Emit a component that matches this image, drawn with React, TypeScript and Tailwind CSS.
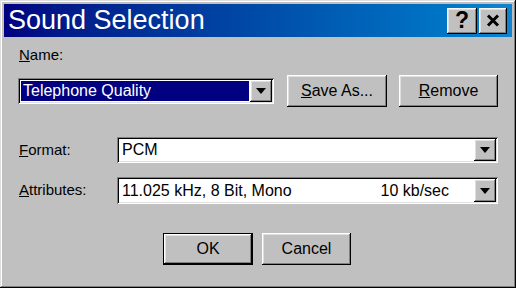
import React from 'react';

const raised =
  'bg-[#c0c0c0] shadow-[inset_-1px_-1px_#000,inset_1px_1px_#fff,inset_-2px_-2px_#808080,inset_2px_2px_#dfdfdf]';
const sunken =
  'shadow-[inset_1px_1px_#808080,inset_-1px_-1px_#fff,inset_2px_2px_#000,inset_-2px_-2px_#dfdfdf]';

const Arrow = () => (
  <svg width="10" height="6" viewBox="0 0 10 6">
    <path d="M0 0 H10 L5 6 Z" fill="#000" />
  </svg>
);

const DropButton = () => (
  <div className={`w-[22px] self-stretch flex items-center justify-center ${raised}`}>
    <Arrow />
  </div>
);

const Combo: React.FC<{ className?: string; children: React.ReactNode; selected?: boolean }> = ({
  className = '',
  children,
  selected,
}) => (
  <div className={`flex bg-white p-[2px] ${sunken} ${className}`}>
    <div className="flex-1 flex items-center p-[1px] min-w-0">
      <div
        className={`flex-1 h-full flex items-center px-[2px] ${
          selected ? 'bg-[#000080] text-white' : 'text-black'
        }`}
      >
        {children}
      </div>
    </div>
    <DropButton />
  </div>
);

const Button: React.FC<{ children: React.ReactNode; className?: string; isDefault?: boolean }> = ({
  children,
  className = '',
  isDefault,
}) =>
  isDefault ? (
    <div className={`border border-black ${className}`}>
      <div className={`w-full h-full flex items-center justify-center ${raised}`}>{children}</div>
    </div>
  ) : (
    <div className={`flex items-center justify-center ${raised} ${className}`}>{children}</div>
  );

export default function App() {
  return (
    <div
      className="w-[516px] h-[288px] bg-[#c0c0c0] p-[4px] flex flex-col text-[16px] text-black shadow-[inset_-1px_-1px_#000,inset_1px_1px_#dfdfdf,inset_-2px_-2px_#808080,inset_2px_2px_#fff]"
      style={{ fontFamily: '"Liberation Sans", Arial, sans-serif' }}
    >
      {/* Title bar */}
      <div className="h-[33px] bg-gradient-to-r from-[#000080] to-[#1084d0] flex items-center pl-[4px] pr-[5px]">
        <span className="text-white text-[27px] leading-none flex-1">Sound Selection</span>
        <Button className="w-[30px] h-[26px]">
          <span className="font-bold text-[23px] leading-none">?</span>
        </Button>
        <Button className="w-[28px] h-[26px] ml-[2px]">
          <svg width="14" height="13" viewBox="0 0 14 13">
            <path d="M2 1.5 L12 11.5 M12 1.5 L2 11.5" stroke="#000" strokeWidth="3" />
          </svg>
        </Button>
      </div>

      {/* Body */}
      <div className="flex flex-col pl-[14px] pr-[14px]">
        <div className="mt-[9px] h-[18px] leading-[18px] text-[15px] pl-[1px]">
          <span className="underline">N</span>ame:
        </div>
        <div className="mt-[11px] h-[32px] flex items-center">
          <Combo selected className="w-[256px] h-[26px]">
            Telephone Quality
          </Combo>
          <Button className="ml-[13px] w-[100px] h-[32px]">
            <span>
              <span className="underline">S</span>ave As...
            </span>
          </Button>
          <Button className="ml-[12px] w-[99px] h-[32px]">
            <span>
              <span className="underline">R</span>emove
            </span>
          </Button>
        </div>

        <div className="mt-[30px] h-[26px] flex items-center">
          <div className="w-[99px] pl-[1px] text-[15px]">
            <span className="underline">F</span>ormat:
          </div>
          <Combo className="w-[381px] h-[26px]">PCM</Combo>
        </div>

        <div className="mt-[14px] h-[27px] flex items-center">
          <div className="w-[99px] pl-[1px] text-[15px]">
            <span className="underline">A</span>ttributes:
          </div>
          <Combo className="w-[381px] h-[27px]">
            <span className="flex-1">11.025 kHz, 8 Bit, Mono</span>
            <span className="mr-[22px]">10 kb/sec</span>
          </Combo>
        </div>

        <div className="mt-[29px] flex justify-center gap-[9px] pr-[2px]">
          <Button isDefault className="w-[90px] h-[32px]">
            OK
          </Button>
          <Button className="w-[89px] h-[32px]">Cancel</Button>
        </div>
      </div>
    </div>
  );
}
